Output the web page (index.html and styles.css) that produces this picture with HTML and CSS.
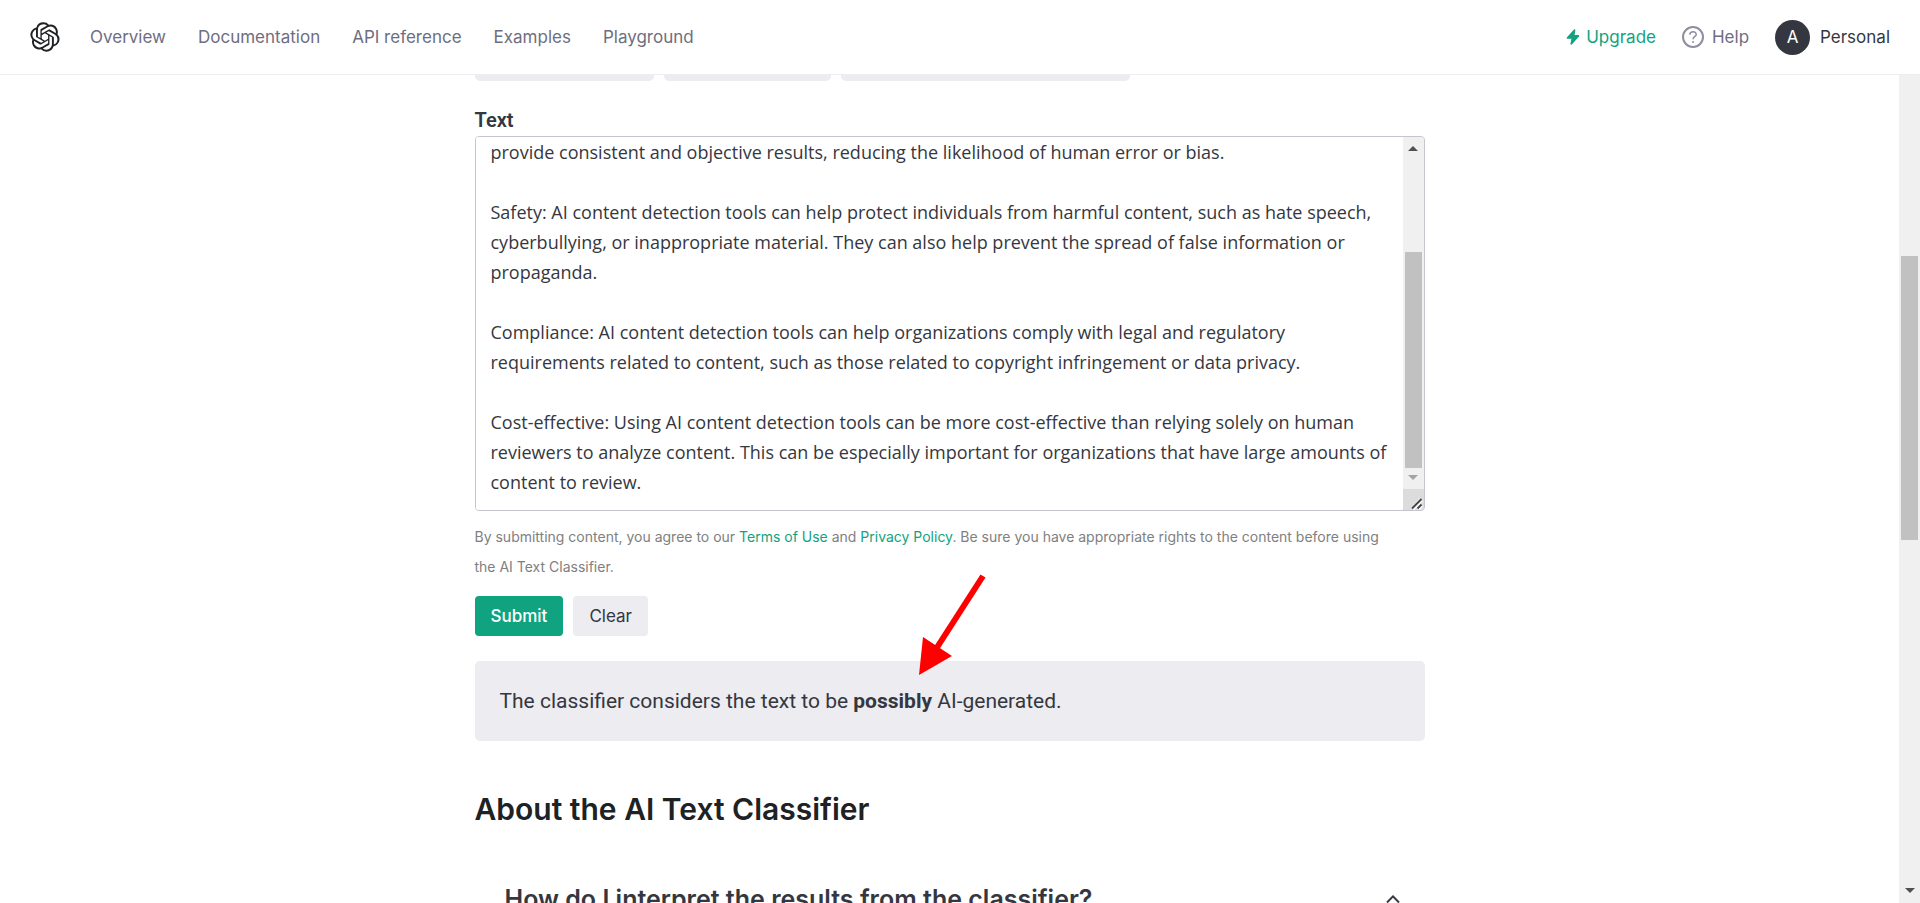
FILE: index.html
```
<!DOCTYPE html>
<html lang="en">

	<head>
		<meta charset="UTF-8">
		<title>AI Text Classifier</title>
		<link rel="stylesheet" href="styles.css">
	</head>

	<body>
		<header class="header">
			<a class="logo" href="#" aria-label="Home">
				<svg viewBox="0 0 41 41" width="30" height="30" fill="currentColor">
					<path d="M37.532 16.87a9.963 9.963 0 0 0-.856-8.184 10.078 10.078 0 0 0-10.855-4.835A9.964 9.964 0 0 0 18.306.5a10.079 10.079 0 0 0-9.614 6.977 9.967 9.967 0 0 0-6.664 4.834 10.08 10.08 0 0 0 1.24 11.817 9.965 9.965 0 0 0 .856 8.185 10.079 10.079 0 0 0 10.855 4.835 9.965 9.965 0 0 0 7.516 3.35 10.078 10.078 0 0 0 9.617-6.981 9.967 9.967 0 0 0 6.663-4.834 10.079 10.079 0 0 0-1.243-11.813ZM22.498 37.886a7.474 7.474 0 0 1-4.799-1.735c.061-.033.168-.091.237-.134l7.964-4.6a1.294 1.294 0 0 0 .655-1.134V19.054l3.366 1.944a.12.12 0 0 1 .066.092v9.299a7.505 7.505 0 0 1-7.49 7.496ZM6.392 31.006a7.471 7.471 0 0 1-.894-5.023c.06.036.162.099.237.141l7.964 4.6a1.297 1.297 0 0 0 1.308 0l9.724-5.614v3.888a.12.12 0 0 1-.048.103l-8.051 4.649a7.504 7.504 0 0 1-10.24-2.744ZM4.297 13.62A7.469 7.469 0 0 1 8.2 10.333c0 .068-.004.19-.004.274v9.201a1.294 1.294 0 0 0 .654 1.132l9.723 5.614-3.366 1.944a.12.12 0 0 1-.114.01L7.04 23.856a7.504 7.504 0 0 1-2.743-10.237Zm27.658 6.437-9.724-5.615 3.367-1.943a.121.121 0 0 1 .113-.01l8.052 4.648a7.498 7.498 0 0 1-1.158 13.528v-9.476a1.293 1.293 0 0 0-.65-1.132Zm3.35-5.043c-.059-.037-.162-.099-.236-.141l-7.965-4.6a1.298 1.298 0 0 0-1.308 0l-9.723 5.614v-3.888a.12.12 0 0 1 .048-.103l8.05-4.645a7.497 7.497 0 0 1 11.135 7.763Zm-21.063 6.929-3.367-1.944a.12.12 0 0 1-.065-.092v-9.299a7.497 7.497 0 0 1 12.293-5.756 6.94 6.94 0 0 0-.236.134l-7.965 4.6a1.294 1.294 0 0 0-.654 1.132l-.006 11.225Zm1.829-3.943 4.33-2.501 4.332 2.5v5l-4.331 2.5-4.331-2.5V18Z" />
				</svg>
			</a>
			<nav class="nav">
				<a href="#">Overview</a>
				<a href="#">Documentation</a>
				<a href="#">API reference</a>
				<a href="#">Examples</a>
				<a href="#">Playground</a>
			</nav>
			<div class="account">
				<a class="upgrade" href="#">
					<svg viewBox="0 0 14 16" width="14" height="16" fill="currentColor">
						<path d="M8 0.4 L1 8.2 Q0.2 9.6 1.4 9.8 H5.4 L4.4 15 Q4.8 16 5.8 15.4 L13 7.4 Q13.6 6.2 12.4 6 H8.6 L9.4 1 Q9.2 -0.2 8 0.4 Z" />
					</svg>
					Upgrade
				</a>
				<a class="help" href="#">
					<svg viewBox="0 0 22 22" width="22" height="22" fill="none" stroke="currentColor">
						<circle cx="11" cy="11" r="10" stroke-width="2" />
						<path d="M7.8 8.6 C8 4.8 14.2 4.8 14.2 8.4 C14.2 10.6 11 10.6 11 13.2" stroke-width="1.5" />
						<circle cx="11" cy="16" r="1" fill="currentColor" stroke="none" />
					</svg>
					Help
				</a>
				<button class="profile" type="button">
					<span class="avatar">A</span>
					Personal
				</button>
			</div>
		</header>

		<div class="page">
			<main class="content">
				<div class="wrap">
					<div class="examples">
						<button class="chip chip-human" type="button" aria-label="Human-written"></button>
						<button class="chip chip-ai" type="button" aria-label="AI-generated"></button>
						<button class="chip chip-mixed" type="button" aria-label="Misclassified human-written"></button>
					</div>

					<form>
						<label class="label" for="text">Text</label>
						<div class="textbox">
							<textarea id="text" rows="12">provide consistent and objective results, reducing the likelihood of human error or bias.

Safety: AI content detection tools can help protect individuals from harmful content, such as hate speech, cyberbullying, or inappropriate material. They can also help prevent the spread of false information or propaganda.

Compliance: AI content detection tools can help organizations comply with legal and regulatory requirements related to content, such as those related to copyright infringement or data privacy.

Cost-effective: Using AI content detection tools can be more cost-effective than relying solely on human reviewers to analyze content. This can be especially important for organizations that have large amounts of content to review.</textarea>
							<div class="bar">
								<i class="up"></i>
								<div class="bar-thumb"></div>
								<i class="down off"></i>
								<svg class="grip" viewBox="0 0 21 21" width="21" height="21" fill="none">
									<path d="M9.5 20 L18.5 10.5 M15 20 L18.5 16" stroke="#fff" stroke-width="4" />
									<path d="M9 19.5 L18.5 10 M14.5 19.5 L18.5 15.5" stroke="#444" stroke-width="2" />
								</svg>
							</div>
						</div>
						<p class="terms">By submitting content, you agree to our <a href="#">Terms of Use</a> and <a href="#">Privacy Policy</a>. Be sure you have appropriate rights to the content before using<br>the AI Text Classifier.</p>
						<div class="actions">
							<button class="btn btn-primary" type="submit">Submit</button>
							<button class="btn" type="reset">Clear</button>
						</div>
					</form>

					<div class="result">
						The classifier considers the text to be <b>possibly</b> AI-generated.
						<svg class="arrow" viewBox="0 0 70 104" width="70" height="104">
							<path d="M65 3 L18 76" stroke="#f00" stroke-width="6" />
							<path d="M1 102 L5 64 L34 83 Z" fill="#f00" />
						</svg>
					</div>

					<h2>About the AI Text Classifier</h2>
					<button class="question" type="button">
						How do I interpret the results from the classifier?
						<svg viewBox="0 0 14 8" width="14" height="8" fill="none" stroke="currentColor" stroke-width="2">
							<path d="M1 7.5 L7 1.4 L13 7.5" />
						</svg>
					</button>
				</div>
			</main>
			<div class="scroll">
				<div class="scroll-thumb"></div>
				<i class="down"></i>
			</div>
		</div>
	</body>

</html>
```
FILE: styles.css
```
* {
	box-sizing: border-box;
	margin: 0;
	padding: 0;
}

body {
	display: flex;
	flex-direction: column;
	height: 100vh;
	overflow: hidden;
	background: #fff;
	color: #353740;
	font-family: Inter, sans-serif;
	font-size: 20px;
}

a {
	color: inherit;
	text-decoration: none;
}

button {
	border: 0;
	background: none;
	color: inherit;
	font-family: inherit;
}

svg {
	flex: none;
}

/* header */
.header {
	display: flex;
	align-items: center;
	flex: none;
	height: 75px;
	padding: 0 30px;
	border-bottom: 1px solid #ececf1;
	font-size: 17px;
	color: #6e6e80;
}

.logo {
	display: flex;
	margin-right: 30px;
	color: #202123;
}

.nav {
	display: flex;
	gap: 32px;
}

.account {
	display: flex;
	align-items: center;
	gap: 26px;
	margin-left: auto;
}

.upgrade {
	display: flex;
	align-items: center;
	gap: 6px;
	color: #10a37f;
}

.help {
	display: flex;
	align-items: center;
	gap: 8px;
}

.help svg {
	color: #8e8ea0;
}

.profile {
	display: flex;
	align-items: center;
	gap: 10px;
	font-size: 17px;
	color: #353740;
}

.avatar {
	width: 35px;
	height: 35px;
	border-radius: 50%;
	background: #353740;
	color: #fff;
	font-size: 17px;
	line-height: 35px;
	text-align: center;
}

/* page */
.page {
	display: flex;
	flex: 1;
	min-height: 0;
}

.content {
	flex: 1;
	overflow: hidden;
}

.wrap {
	max-width: 950px;
	margin: 0 auto;
}

.examples {
	display: flex;
	gap: 10px;
	margin-bottom: 24px;
}

.chip {
	height: 6px;
	border-radius: 0 0 5px 5px;
	background: #ececf1;
}

.chip-human {
	width: 179px;
}

.chip-ai {
	width: 167px;
}

.chip-mixed {
	width: 289px;
}

.label {
	display: block;
	font-family: Roboto, sans-serif;
	font-weight: 600;
	line-height: 31px;
}

.textbox {
	display: flex;
	border: 1px solid #c5c5d2;
	border-radius: 4px;
	overflow: hidden;
}

textarea {
	display: block;
	flex: 1;
	padding: 0 15px 13px;
	border: 0;
	outline: 0;
	overflow: hidden;
	resize: none;
	color: #353740;
	font-family: "Open Sans", sans-serif;
	font-size: 18px;
	line-height: 30px;
}

.bar {
	display: flex;
	flex-direction: column;
	align-items: center;
	width: 21px;
	background: #f0f0f0;
}

.bar-thumb {
	flex: 1;
	width: 17px;
	margin-top: 101px;
	background: #c1c1c1;
}

.up {
	margin-top: 9px;
	border: 5px solid transparent;
	border-top: 0;
	border-bottom-color: #505050;
}

.down {
	border: 5px solid transparent;
	border-bottom: 0;
	border-top-color: #505050;
}

.off {
	margin: 7px 0 9px;
	border-top-color: #a3a3a3;
}

.grip {
	background: #dcdcdc;
}

.terms {
	margin-top: 11px;
	color: #808080;
	font-size: 14px;
	line-height: 30px;
}

.terms a {
	color: #10a37f;
}

.actions {
	display: flex;
	gap: 10px;
	margin-top: 14px;
}

.btn {
	height: 40px;
	padding: 0 16px;
	border-radius: 4px;
	background: #ececf1;
	font-size: 17px;
}

.btn-primary {
	background: #10a37f;
	color: #fff;
	font-weight: 500;
}

.result {
	position: relative;
	margin-top: 25px;
	padding: 25px;
	border-radius: 5px;
	background: #ececf1;
	font-family: Roboto, sans-serif;
	font-size: 21px;
	line-height: 30px;
}

/* pointer to the verdict */
.arrow {
	position: absolute;
	left: 443px;
	top: -88px;
}

h2 {
	margin-top: 48px;
	color: #202123;
	font-size: 30px;
	font-weight: 600;
	line-height: 40px;
}

.question {
	display: flex;
	align-items: center;
	justify-content: space-between;
	width: 100%;
	margin-top: 54px;
	padding: 0 25px 0 30px;
	font-size: 25px;
	font-weight: 600;
	line-height: 32px;
}

/* page scrollbar */
.scroll {
	display: flex;
	flex-direction: column;
	align-items: center;
	width: 21px;
	padding: 181px 0 10px;
	background: #f0f0f0;
}

.scroll-thumb {
	width: 17px;
	height: 284px;
	margin-bottom: auto;
	background: #c1c1c1;
}
```
